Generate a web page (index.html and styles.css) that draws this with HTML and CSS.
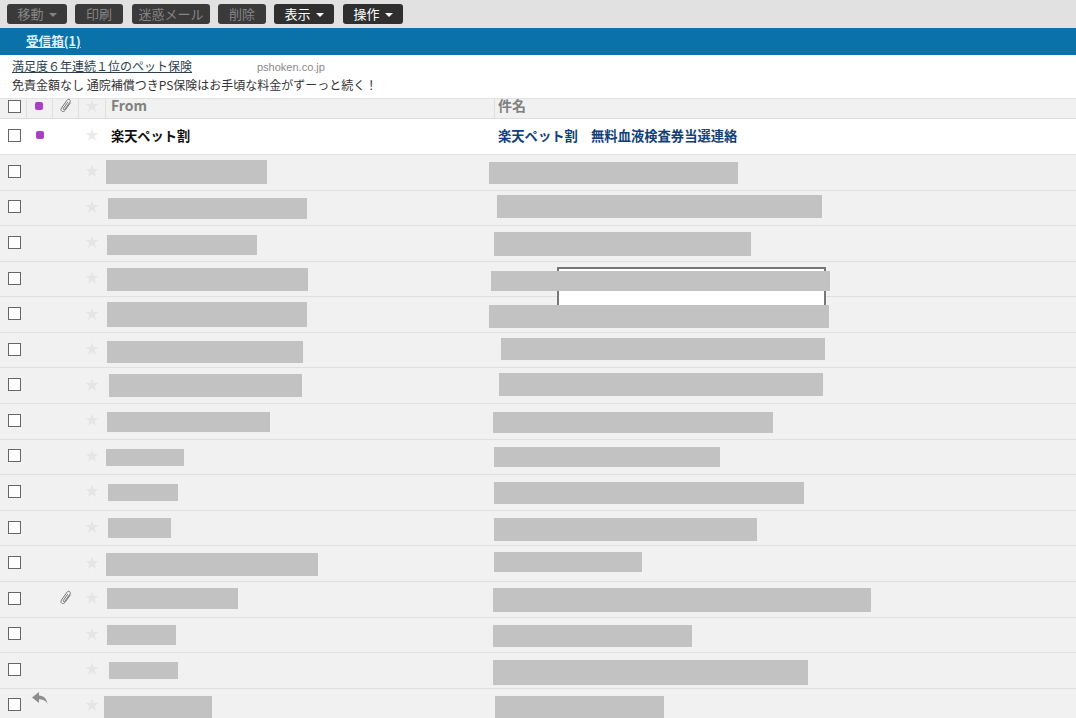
FILE: index.html
```html
<!DOCTYPE html>
<html lang="ja">
<head>
<meta charset="utf-8">
<title>受信箱</title>
<link rel="stylesheet" href="styles.css">
</head>
<body>
<svg class="defs" width="0" height="0" aria-hidden="true">
  <symbol id="star" viewBox="0 0 14 14"><path d="M7 .6 8.7 5h4.8L9.6 8l1.5 5L7 10.1 2.9 13l1.5-5L.5 5h4.8z"/></symbol>
  <symbol id="clip" viewBox="0 0 14 16"><path d="M11.6 4.6 6 12.4c-.9 1.2-2.2 1.5-3.2.8-1-.7-1.1-2.1-.3-3.2L8 2.2c.7-1 1.8-1.2 2.6-.6.8.6.9 1.7.2 2.7l-5 7c-.4.5-.9.6-1.3.3-.4-.3-.4-.8-.1-1.3l4.4-6.2" fill="none" stroke="currentColor" stroke-width="1"/></symbol>
</svg>
<div class="toolbar">
  <span class="btn off">移動<i class="caret"></i></span>
  <span class="btn off print">印刷</span>
  <span class="btn off spam">迷惑メール</span>
  <span class="btn off del">削除</span>
  <span class="btn view">表示<i class="caret"></i></span>
  <span class="btn act">操作<i class="caret"></i></span>
</div>
<div class="tabbar"><a class="tab" href="#">受信箱(1)</a></div>
<div class="ad">
  <div class="ad-top"><a class="ad-title" href="#">満足度６年連続１位のペット保険</a><span class="ad-domain">pshoken.co.jp</span></div>
  <div class="ad-text">免責金額なし 通院補償つきPS保険はお手頃な料金がずーっと続く！</div>
</div>
<div class="list">
  <div class="row head">
    <div class="c-check"><span class="box"></span></div>
    <div class="c-dot"><span class="dot"></span></div>
    <div class="c-clip"><svg class="clip"><use href="#clip"/></svg></div>
    <div class="c-star"><svg class="star"><use href="#star"/></svg></div>
    <div class="c-from">From</div>
    <div class="c-subj">件名</div>
  </div>
  <div class="row unread">
    <div class="c-check"><span class="box"></span></div>
    <div class="c-dot"><span class="dot"></span></div>
    <div class="c-clip"></div>
    <div class="c-star"><svg class="star"><use href="#star"/></svg></div>
    <div class="c-from">楽天ペット割</div>
    <div class="c-subj">楽天ペット割　無料血液検査券当選連絡</div>
  </div>
  <div class="row"><div class="c-check"><span class="box"></span></div><div class="c-dot"></div><div class="c-clip"></div><div class="c-star"><svg class="star"><use href="#star"/></svg></div></div>
  <div class="row"><div class="c-check"><span class="box"></span></div><div class="c-dot"></div><div class="c-clip"></div><div class="c-star"><svg class="star"><use href="#star"/></svg></div></div>
  <div class="row"><div class="c-check"><span class="box"></span></div><div class="c-dot"></div><div class="c-clip"></div><div class="c-star"><svg class="star"><use href="#star"/></svg></div></div>
  <div class="row"><div class="c-check"><span class="box"></span></div><div class="c-dot"></div><div class="c-clip"></div><div class="c-star"><svg class="star"><use href="#star"/></svg></div></div>
  <div class="row"><div class="c-check"><span class="box"></span></div><div class="c-dot"></div><div class="c-clip"></div><div class="c-star"><svg class="star"><use href="#star"/></svg></div></div>
  <div class="row"><div class="c-check"><span class="box"></span></div><div class="c-dot"></div><div class="c-clip"></div><div class="c-star"><svg class="star"><use href="#star"/></svg></div></div>
  <div class="row"><div class="c-check"><span class="box"></span></div><div class="c-dot"></div><div class="c-clip"></div><div class="c-star"><svg class="star"><use href="#star"/></svg></div></div>
  <div class="row"><div class="c-check"><span class="box"></span></div><div class="c-dot"></div><div class="c-clip"></div><div class="c-star"><svg class="star"><use href="#star"/></svg></div></div>
  <div class="row"><div class="c-check"><span class="box"></span></div><div class="c-dot"></div><div class="c-clip"></div><div class="c-star"><svg class="star"><use href="#star"/></svg></div></div>
  <div class="row"><div class="c-check"><span class="box"></span></div><div class="c-dot"></div><div class="c-clip"></div><div class="c-star"><svg class="star"><use href="#star"/></svg></div></div>
  <div class="row"><div class="c-check"><span class="box"></span></div><div class="c-dot"></div><div class="c-clip"></div><div class="c-star"><svg class="star"><use href="#star"/></svg></div></div>
  <div class="row"><div class="c-check"><span class="box"></span></div><div class="c-dot"></div><div class="c-clip"></div><div class="c-star"><svg class="star"><use href="#star"/></svg></div></div>
  <div class="row"><div class="c-check"><span class="box"></span></div><div class="c-dot"></div><div class="c-clip"><svg class="clip"><use href="#clip"/></svg></div><div class="c-star"><svg class="star"><use href="#star"/></svg></div></div>
  <div class="row"><div class="c-check"><span class="box"></span></div><div class="c-dot"></div><div class="c-clip"></div><div class="c-star"><svg class="star"><use href="#star"/></svg></div></div>
  <div class="row"><div class="c-check"><span class="box"></span></div><div class="c-dot"></div><div class="c-clip"></div><div class="c-star"><svg class="star"><use href="#star"/></svg></div></div>
  <div class="row"><div class="c-check"><span class="box"></span></div><div class="c-dot"><svg class="reply" viewBox="0 0 16 13"><path d="M0 5.5 7 0v3.4c4.6.2 7.8 3 8.7 8.6-1.8-3.3-4.6-4.6-8.7-4.7V11z"/></svg></div><div class="c-clip"></div><div class="c-star"><svg class="star"><use href="#star"/></svg></div></div>

  <div class="popup"></div>

  <span class="mask" style="left:106px;top:62px;width:161px;height:24px"></span>
  <span class="mask" style="left:489px;top:64px;width:249px;height:22px"></span>
  <span class="mask" style="left:108px;top:100px;width:199px;height:21px"></span>
  <span class="mask" style="left:497px;top:97px;width:325px;height:23px"></span>
  <span class="mask" style="left:107px;top:137px;width:150px;height:20px"></span>
  <span class="mask" style="left:494px;top:134px;width:257px;height:24px"></span>
  <span class="mask" style="left:107px;top:170px;width:201px;height:23px"></span>
  <span class="mask" style="left:491px;top:173px;width:339px;height:20px"></span>
  <span class="mask" style="left:107px;top:204px;width:200px;height:25px"></span>
  <span class="mask" style="left:489px;top:207px;width:340px;height:23px"></span>
  <span class="mask" style="left:107px;top:243px;width:196px;height:22px"></span>
  <span class="mask" style="left:501px;top:240px;width:324px;height:22px"></span>
  <span class="mask" style="left:109px;top:276px;width:193px;height:23px"></span>
  <span class="mask" style="left:499px;top:275px;width:324px;height:23px"></span>
  <span class="mask" style="left:107px;top:314px;width:163px;height:20px"></span>
  <span class="mask" style="left:493px;top:314px;width:280px;height:21px"></span>
  <span class="mask" style="left:106px;top:351px;width:78px;height:17px"></span>
  <span class="mask" style="left:494px;top:349px;width:226px;height:20px"></span>
  <span class="mask" style="left:108px;top:386px;width:70px;height:17px"></span>
  <span class="mask" style="left:494px;top:384px;width:310px;height:22px"></span>
  <span class="mask" style="left:108px;top:420px;width:63px;height:20px"></span>
  <span class="mask" style="left:494px;top:420px;width:263px;height:23px"></span>
  <span class="mask" style="left:106px;top:455px;width:212px;height:23px"></span>
  <span class="mask" style="left:494px;top:454px;width:148px;height:20px"></span>
  <span class="mask" style="left:107px;top:490px;width:131px;height:21px"></span>
  <span class="mask" style="left:493px;top:490px;width:378px;height:24px"></span>
  <span class="mask" style="left:107px;top:527px;width:69px;height:20px"></span>
  <span class="mask" style="left:493px;top:527px;width:199px;height:22px"></span>
  <span class="mask" style="left:109px;top:564px;width:69px;height:17px"></span>
  <span class="mask" style="left:493px;top:562px;width:315px;height:25px"></span>
  <span class="mask" style="left:104px;top:598px;width:108px;height:22px"></span>
  <span class="mask" style="left:495px;top:598px;width:169px;height:22px"></span>
</div>
</body>
</html>
```
FILE: styles.css
```css
* { box-sizing: border-box; }
html, body { margin: 0; height: 100%; }
body {
  width: 1076px;
  height: 718px;
  overflow: hidden;
  background: #f1f1f1;
  font-family: "Noto Sans CJK JP", "Noto Sans", sans-serif;
  font-size: 13px;
  color: #333;
}
.defs { position: absolute; }

.toolbar {
  display: flex;
  align-items: flex-start;
  height: 28px;
  padding: 4px 0 0 7px;
  background: #e1e1e1;
}
.btn {
  display: flex;
  align-items: center;
  justify-content: center;
  gap: 5px;
  width: 60px;
  height: 20px;
  margin-right: 8px;
  border-radius: 3px;
  background: #2f2f2f;
  color: #fff;
  font-size: 13px;
  line-height: 20px;
}
.btn.off { background: #3a3a3a; color: #858585; }
.btn.print { width: 48px; margin-right: 9px; }
.btn.spam { width: 78px; }
.btn.del { width: 48px; }
.btn.view { margin-right: 9px; }
.caret {
  width: 0;
  height: 0;
  margin-top: 2px;
  border-left: 4px solid transparent;
  border-right: 4px solid transparent;
  border-top: 4px solid currentColor;
}

.tabbar {
  height: 27px;
  padding-left: 26px;
  background: #0b72a9;
  line-height: 26px;
}
.tab {
  color: #d8f2ff;
  font-size: 12.6px;
  font-weight: 700;
  text-decoration: underline;
}

.ad {
  height: 43px;
  padding: 2px 0 0 12px;
  background: #fff;
  font-size: 12px;
  line-height: 18px;
}
.ad-top { display: flex; align-items: baseline; }
.ad-title { width: 245px; color: #2b3f4d; text-decoration: underline; }
.ad-domain { color: #8a8a8a; font-family: "Liberation Sans", sans-serif; font-size: 11px; }
.ad-text { color: #333; }

.list { position: relative; height: 620px; }
.row {
  display: flex;
  align-items: center;
  height: 35.58px;
  padding-bottom: 2px;
  border-bottom: 1px solid #e0e0e0;
}
.row > div { display: flex; align-items: center; justify-content: center; height: 100%; }
.c-check { width: 27px; padding: 0 0 0 2px; }
.c-dot { width: 26px; position: relative; }
.c-clip { width: 26px; }
.c-star { width: 27px; padding-right: 1px; }
.row > .c-from, .row > .c-subj { justify-content: flex-start; }
.c-from { width: 388px; padding-left: 5px; }
.c-subj { flex: 1; padding-left: 4px; }

.box {
  width: 13px;
  height: 13px;
  background: #fff;
  border: 1px solid #666;
}
.dot { width: 8px; height: 8px; margin-right: 1px; border-radius: 2px; background: #a83fc8; }
.star { width: 14px; height: 14px; fill: #e5e5e5; }
.clip { width: 14px; height: 16px; color: #777; }
.reply {
  position: absolute;
  left: 5px;
  top: 3px;
  width: 16px;
  height: 13px;
  fill: #8d8d8d;
}

.head { height: 21px; padding-bottom: 0; background: #f1f1f1; border-top: 1px solid #e2e2e2; border-bottom: 1px solid #dcdcdc; }
.head > div { padding-bottom: 5px; border-right: 1px solid #e0e0e0; }
.row.head > .c-from, .row.head > .c-subj {
  align-items: flex-start;
  padding-bottom: 0;
  color: #808080;
  font-weight: 700;
  font-size: 14px;
  line-height: 13px;
}
.row.head > .c-subj { padding-left: 3px; border-left: 1px solid #e0e0e0; border-right: 0; }
.row.head > .c-from { border-right: 0; }

.unread { height: 36px; padding-bottom: 3px; background: #fff; }
.unread .star { fill: #ebebeb; }
.unread .c-from { color: #111; font-weight: 700; font-size: 13.2px; }
.unread .c-subj { color: #123f78; font-weight: 700; font-size: 13.3px; }

.popup {
  position: absolute;
  left: 557px;
  top: 169px;
  width: 269px;
  height: 38px;
  background: #fff;
  border: 2px solid #777;
  border-bottom: 0;
}
.mask { position: absolute; background: #c2c2c2; }
```
